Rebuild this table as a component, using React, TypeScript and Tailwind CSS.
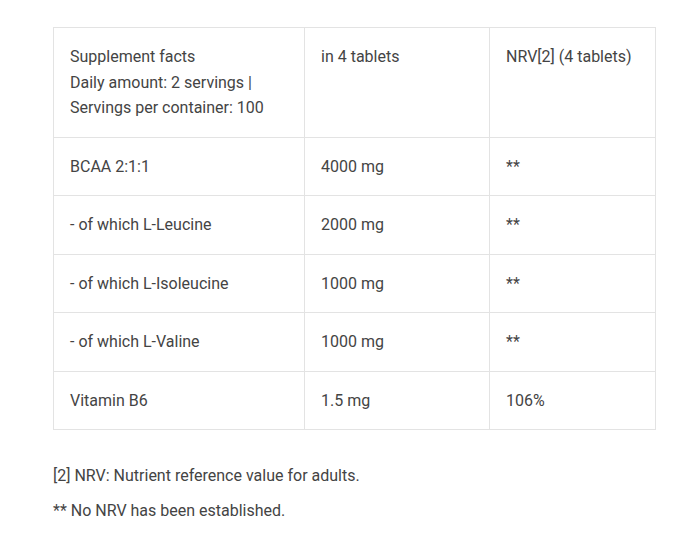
export default function App() {
  const rows = [
    { name: "BCAA 2:1:1", amount: "4000 mg", nrv: "**" },
    { name: "- of which L-Leucine", amount: "2000 mg", nrv: "**" },
    { name: "- of which L-Isoleucine", amount: "1000 mg", nrv: "**" },
    { name: "- of which L-Valine", amount: "1000 mg", nrv: "**" },
    { name: "Vitamin B6", amount: "1.5 mg", nrv: "106%" },
  ];

  return (
    <div className="min-h-[541px] bg-white pt-[27px] pl-[53px] font-['Roboto',sans-serif] text-[16px] leading-[25.5px] text-[#444]">
      <table className="w-[602px] table-fixed border-collapse">
        <colgroup>
          <col className="w-[251px]" />
          <col className="w-[185px]" />
          <col className="w-[166px]" />
        </colgroup>
        <tbody>
          <tr>
            <td className="border border-[#e3e3e3] px-4 py-4 align-top">
              Supplement facts
              <br />
              Daily amount: 2 servings |
              <br />
              Servings per container: 100
            </td>
            <td className="border border-[#e3e3e3] px-4 py-4 align-top">
              in 4 tablets
            </td>
            <td className="border border-[#e3e3e3] px-4 py-4 align-top">
              NRV[2] (4 tablets)
            </td>
          </tr>
          {rows.map((row, i) => (
            <tr key={i}>
              <td className="border border-[#e3e3e3] px-4 py-4 align-top">
                {row.name}
              </td>
              <td className="border border-[#e3e3e3] px-4 py-4 align-top">
                {row.amount}
              </td>
              <td className="border border-[#e3e3e3] px-4 py-4 align-top">
                {row.nrv}
              </td>
            </tr>
          ))}
        </tbody>
      </table>
      <p className="mt-[33px]">[2] NRV: Nutrient reference value for adults.</p>
      <p className="mt-[9px]">** No NRV has been established.</p>
    </div>
  );
}
